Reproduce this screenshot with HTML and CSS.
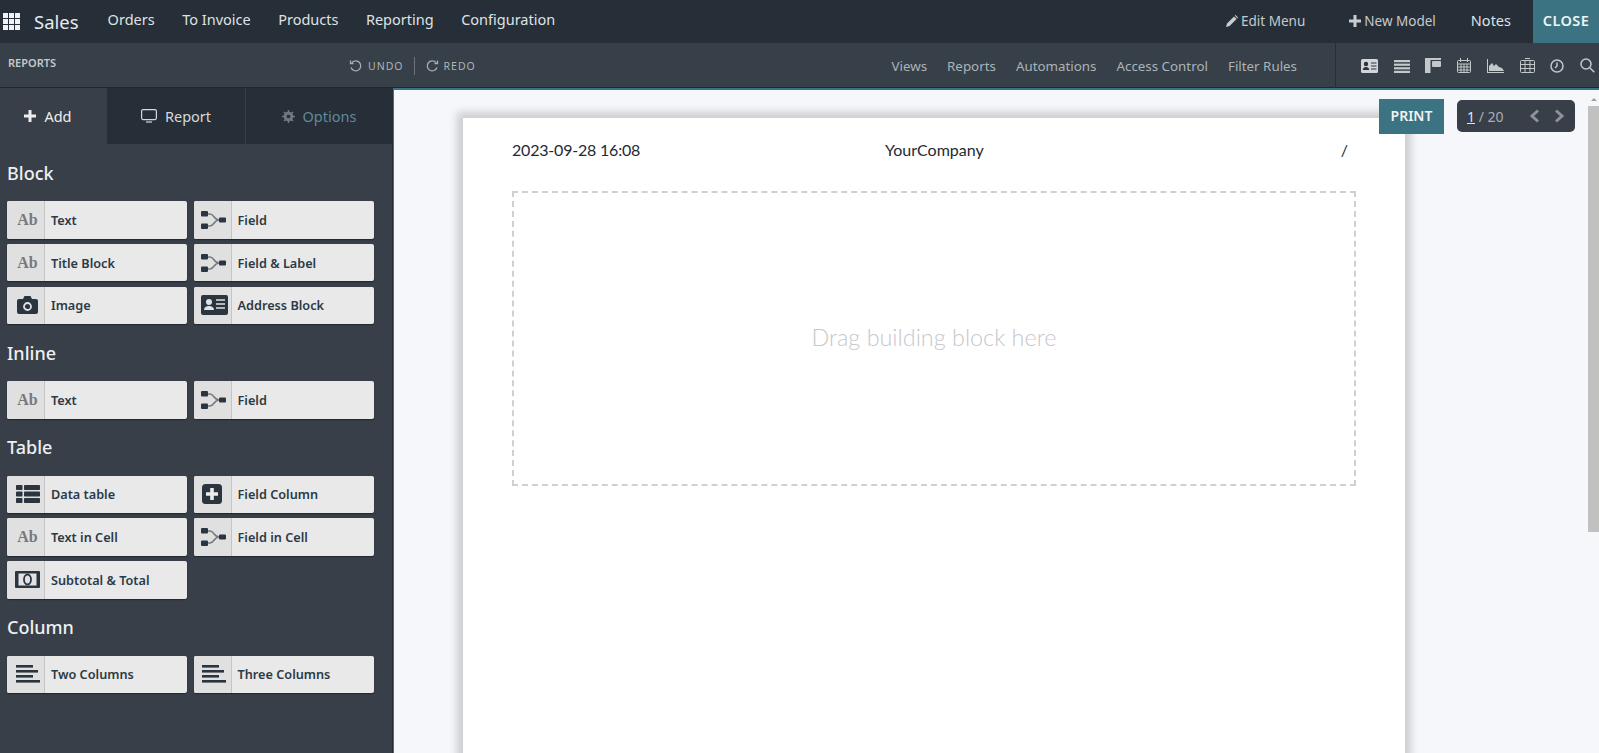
FILE: index.html
```html
<!DOCTYPE html>
<html lang="en">
<head>
    <meta charset="UTF-8">
    <title>Sales - Reports</title>
    <link rel="stylesheet" href="styles.css">
</head>
<body>
    <svg class="defs" width="0" height="0">
        <symbol id="i-field" viewBox="0 0 26 20">
            <path d="M6 4h3c4 0 4 6 9 6M6 16h3c4 0 4-6 9-6" fill="none" stroke="#77797c" stroke-width="1.6"/>
            <rect x="0" y="1" width="7" height="5.5" rx="1" fill="#2b3540"/>
            <rect x="0" y="13.5" width="7" height="5.5" rx="1" fill="#2b3540"/>
            <rect x="18" y="7.5" width="7" height="5" rx="1" fill="#2b3540"/>
        </symbol>
        <symbol id="i-lines" viewBox="0 0 24 20">
            <rect x="0" y="1" width="17" height="2.6" fill="#2b3540"/>
            <rect x="0" y="6" width="22" height="2.6" fill="#2b3540"/>
            <rect x="0" y="11" width="17" height="2.6" fill="#2b3540"/>
            <rect x="0" y="16" width="24" height="2.6" fill="#2b3540"/>
        </symbol>
    </svg>

    <header class="topbar">
        <svg class="apps" width="17" height="17" viewBox="0 0 17 17" fill="#f0f2f3">
            <rect width="5" height="5"/><rect x="6" width="5" height="5"/><rect x="12" width="5" height="5"/>
            <rect y="6" width="5" height="5"/><rect x="6" y="6" width="5" height="5"/><rect x="12" y="6" width="5" height="5"/>
            <rect y="12" width="5" height="5"/><rect x="6" y="12" width="5" height="5"/><rect x="12" y="12" width="5" height="5"/>
        </svg>
        <span class="brand">Sales</span>
        <nav class="menu">
            <a>Orders</a>
            <a>To Invoice</a>
            <a>Products</a>
            <a>Reporting</a>
            <a>Configuration</a>
        </nav>
        <div class="studio-menu">
            <a class="edit-menu">
                <svg width="12" height="12" viewBox="0 0 12 12" fill="#c9cdd0"><path d="M0 12l1-3.6L8 1.4 10.6 4 3.600 11zM8.800 .6l.8-.6 2.400 2.400-.8 1z"/></svg>
                Edit Menu
            </a>
            <a class="new-model">
                <svg width="12" height="12" viewBox="0 0 12 12" fill="#c9cdd0"><path d="M4.500 0h3v4.500H12v3H7.500V12h-3V7.500H0v-3h4.500z"/></svg>
                New Model
            </a>
            <a class="notes">Notes</a>
            <a class="close">CLOSE</a>
        </div>
    </header>

    <div class="toolbar">
        <span class="crumb">REPORTS</span>
        <div class="history">
            <a class="hist-btn">
                <svg width="14" height="14" viewBox="0 0 14 14" fill="none" stroke="#a7b0b4" stroke-width="1.3"><path d="M3 3.500A5 5 0 1 1 2 8.500"/><path d="M1.500 1.500v3h3"/></svg>
                UNDO
            </a>
            <i class="hist-sep"></i>
            <a class="hist-btn">
                <svg width="14" height="14" viewBox="0 0 14 14" fill="none" stroke="#a7b0b4" stroke-width="1.3"><path d="M11 3.500A5 5 0 1 0 12 8.500"/><path d="M12.500 1.500v3h-3"/></svg>
                REDO
            </a>
        </div>
        <nav class="links">
            <a>Views</a>
            <a>Reports</a>
            <a>Automations</a>
            <a>Access Control</a>
            <a>Filter Rules</a>
        </nav>
        <div class="views">
            <svg width="17" height="14" viewBox="0 0 17 14"><rect width="17" height="14" rx="1.500" fill="#d3d6d8"/><circle cx="5" cy="5" r="2.200" fill="#2b3540"/><path d="M1.800 11c0-4 6.400-4 6.400 0z" fill="#2b3540"/><path d="M10 4h5.500M10 7h5.500M10 10h5.500" stroke="#2b3540"/></svg>
            <svg width="16" height="14" viewBox="0 0 16 14" fill="#c3c8ca"><rect y="1" width="16" height="2.200"/><rect y="4.600" width="16" height="2.200"/><rect y="8.200" width="16" height="2.200"/><rect y="11.800" width="16" height="2.200"/></svg>
            <svg width="16" height="15" viewBox="0 0 16 15" fill="#c3c8ca"><rect width="16" height="2"/><rect y="2" width="5.500" height="13"/><rect x="7" y="3" width="9" height="6" rx="1"/></svg>
            <svg width="14" height="15" viewBox="0 0 14 15" fill="none" stroke="#c3c8ca"><rect x=".5" y="2.500" width="13" height="12" rx="1"/><path d="M.5 6h13M.5 9h13M.5 12h13M4 6v8M7 6v8M10 6v8M3.500 0v4M10.500 0v4"/></svg>
            <svg width="17" height="14" viewBox="0 0 17 14" fill="#c3c8ca"><path d="M0 0h1v13h16v1H0z"/><path d="M2 12V7l3-3 2 3 2-2 3 3 3 1 2 3z"/></svg>
            <svg width="15" height="15" viewBox="0 0 15 15" fill="none" stroke="#c3c8ca"><rect x=".5" y="2.500" width="14" height="12" rx="1"/><path d="M.5 6.500h14M.5 10.500h14M5 2.500v12M10 2.500v12M5 .5h5"/></svg>
            <svg width="14" height="14" viewBox="0 0 14 14" fill="none" stroke="#c3c8ca" stroke-width="1.5"><circle cx="7" cy="7" r="6"/><path d="M7 3.500V7L5 9"/></svg>
            <svg width="15" height="15" viewBox="0 0 15 15" fill="none" stroke="#c3c8ca" stroke-width="1.5"><circle cx="6" cy="6" r="5"/><path d="M9.800 9.800l4.500 4.500"/></svg>
        </div>
    </div>

    <div class="workspace">
        <aside class="sidebar">
            <div class="tabs">
                <a class="tab tab-add">
                    <svg width="12" height="12" viewBox="0 0 12 12" fill="#eceef0"><path d="M4.500 0h3v4.500H12v3H7.500V12h-3V7.500H0v-3h4.500z"/></svg>
                    Add
                </a>
                <a class="tab tab-report">
                    <svg width="16" height="14" viewBox="0 0 16 14" fill="none" stroke="#d6d9db" stroke-width="1.2"><rect x=".6" y=".6" width="14.800" height="10" rx="1.500"/><path d="M5 13h6"/></svg>
                    Report
                </a>
                <a class="tab tab-options">
                    <svg width="13" height="13" viewBox="0 0 13 13"><circle cx="6.500" cy="6.500" r="3.600" fill="none" stroke="#717a80" stroke-width="2.4"/><path d="M6.500 0v13M0 6.500h13M2 2l9 9M11 2l-9 9" stroke="#717a80" stroke-width="1.5"/><circle cx="6.500" cy="6.500" r="1.800" fill="#262e38"/></svg>
                    Options
                </a>
            </div>

            <section class="group">
                <h3>Block</h3>
                <div class="blocks">
                    <div class="block"><span class="block-icon ab">Ab</span><span class="block-label">Text</span></div>
                    <div class="block"><span class="block-icon"><svg width="26" height="20"><use href="#i-field"/></svg></span><span class="block-label">Field</span></div>
                    <div class="block"><span class="block-icon ab">Ab</span><span class="block-label">Title Block</span></div>
                    <div class="block"><span class="block-icon"><svg width="26" height="20"><use href="#i-field"/></svg></span><span class="block-label">Field &amp; Label</span></div>
                    <div class="block">
                        <span class="block-icon">
                            <svg width="21" height="18" viewBox="0 0 21 18"><path d="M2 3h4l1.500-3h6L15 3h4a2 2 0 0 1 2 2v11a2 2 0 0 1-2 2H2a2 2 0 0 1-2-2V5a2 2 0 0 1 2-2z" fill="#2b3540"/><circle cx="10.500" cy="10.500" r="3.500" fill="none" stroke="#e2e2e2" stroke-width="1.8"/></svg>
                        </span>
                        <span class="block-label">Image</span>
                    </div>
                    <div class="block">
                        <span class="block-icon">
                            <svg width="27" height="20" viewBox="0 0 27 20"><rect width="27" height="20" rx="2" fill="#2b3540"/><circle cx="8" cy="7" r="3" fill="#e2e2e2"/><path d="M3 15c0-5.500 10-5.500 10 0z" fill="#e2e2e2"/><path d="M15 5h9M15 9h9M15 13h9" stroke="#e2e2e2" stroke-width="1.5"/></svg>
                        </span>
                        <span class="block-label">Address Block</span>
                    </div>
                </div>
            </section>

            <section class="group">
                <h3>Inline</h3>
                <div class="blocks">
                    <div class="block"><span class="block-icon ab">Ab</span><span class="block-label">Text</span></div>
                    <div class="block"><span class="block-icon"><svg width="26" height="20"><use href="#i-field"/></svg></span><span class="block-label">Field</span></div>
                </div>
            </section>

            <section class="group">
                <h3>Table</h3>
                <div class="blocks">
                    <div class="block">
                        <span class="block-icon">
                            <svg width="24" height="18" viewBox="0 0 24 18" fill="#2b3540"><rect width="6.500" height="5" rx=".8"/><rect x="8" width="16" height="5" rx=".8"/><rect y="6.500" width="6.500" height="5" rx=".8"/><rect x="8" y="6.500" width="16" height="5" rx=".8"/><rect y="13" width="6.500" height="5" rx=".8"/><rect x="8" y="13" width="16" height="5" rx=".8"/></svg>
                        </span>
                        <span class="block-label">Data table</span>
                    </div>
                    <div class="block">
                        <span class="block-icon icon-plus">
                            <svg width="20" height="20" viewBox="0 0 20 20"><rect width="20" height="20" rx="3.500" fill="#2b3540"/><path d="M8.200 4h3.600v4.200H16v3.600h-4.200V16H8.200v-4.200H4V8.200h4.200z" fill="#ececec"/></svg>
                        </span>
                        <span class="block-label">Field Column</span>
                    </div>
                    <div class="block"><span class="block-icon ab">Ab</span><span class="block-label">Text in Cell</span></div>
                    <div class="block"><span class="block-icon"><svg width="26" height="20"><use href="#i-field"/></svg></span><span class="block-label">Field in Cell</span></div>
                    <div class="block">
                        <span class="block-icon">
                            <svg width="25" height="17" viewBox="0 0 25 17"><rect width="25" height="17" rx="1" fill="#2b3540"/><rect x="3.500" y="2.500" width="18" height="12" fill="#e2e2e2"/><ellipse cx="12.500" cy="8.500" rx="3.500" ry="5" fill="none" stroke="#2b3540" stroke-width="1.8"/></svg>
                        </span>
                        <span class="block-label">Subtotal &amp; Total</span>
                    </div>
                </div>
            </section>

            <section class="group">
                <h3>Column</h3>
                <div class="blocks">
                    <div class="block"><span class="block-icon"><svg width="24" height="20"><use href="#i-lines"/></svg></span><span class="block-label">Two Columns</span></div>
                    <div class="block"><span class="block-icon"><svg width="24" height="20"><use href="#i-lines"/></svg></span><span class="block-label">Three Columns</span></div>
                </div>
            </section>
        </aside>

        <main class="canvas">
            <div class="sheet">
                <div class="sheet-head">
                    <span class="head-date">2023-09-28 16:08</span>
                    <span class="head-company">YourCompany</span>
                    <span class="head-page">/</span>
                </div>
                <div class="dropzone">Drag building block here</div>
            </div>
            <a class="print">PRINT</a>
            <div class="pager">
                <span class="pager-count"><u>1</u> / 20</span>
                <span class="pager-arrows">
                    <svg width="11" height="14" viewBox="0 0 11 14" fill="none" stroke="#8d9296" stroke-width="3"><path d="M9 1.500L3 7l6 5.500"/></svg>
                    <svg width="11" height="14" viewBox="0 0 11 14" fill="none" stroke="#8d9296" stroke-width="3"><path d="M2 1.500L8 7l-6 5.500"/></svg>
                </span>
            </div>
            <div class="scrollbar"><div class="scroll-thumb"></div></div>
        </main>
    </div>
</body>
</html>
```

FILE: styles.css
```css
* {
    box-sizing: border-box;
}
html, body {
    height: 100%;
}
body {
    margin: 0;
    display: flex;
    flex-direction: column;
    overflow: hidden;
    font-family: "Noto Sans", Arial, sans-serif;
    background-color: #f5f7fa;
}
.defs {
    position: absolute;
}

/* top bar */
.topbar {
    height: 43px;
    flex: none;
    display: flex;
    align-items: center;
    padding-left: 3px;
    background-color: #262e38;
    color: #dfe2e4;
    font-size: 14.5px;
}
.brand {
    margin-left: 14px;
    font-size: 18.5px;
    color: #e8eaec;
}
.menu {
    display: flex;
    gap: 27.5px;
    margin-left: 29px;
    padding-bottom: 5px;
}
.studio-menu {
    margin-left: auto;
    height: 100%;
    display: flex;
    align-items: center;
}
.edit-menu, .new-model {
    display: flex;
    align-items: center;
    gap: 3px;
    padding-bottom: 2px;
    font-size: 13.5px;
    color: #c5cacd;
}
.new-model {
    margin-left: 44px;
}
.notes {
    margin-left: 35px;
    padding-bottom: 3px;
}
.close {
    margin-left: 22px;
    width: 66px;
    height: 100%;
    padding-bottom: 4px;
    display: flex;
    align-items: center;
    justify-content: center;
    background-color: #3c7382;
    color: #eef3f4;
    font-size: 14.5px;
    font-weight: 600;
    letter-spacing: .4px;
}

/* second bar */
.toolbar {
    height: 45px;
    flex: none;
    display: flex;
    align-items: center;
    background-color: #373f48;
    box-shadow: inset 0 -1px 0 #1f2730;
    color: #a9b4b8;
}
.crumb {
    width: 349px;
    padding-left: 8px;
    margin-top: -7px;
    font-size: 11px;
    font-weight: 600;
    color: #c4c9cc;
}
.history {
    display: flex;
    align-items: center;
    font-size: 10.5px;
    letter-spacing: 1px;
}
.hist-btn {
    display: flex;
    align-items: center;
    gap: 5px;
}
.hist-sep {
    width: 1px;
    height: 18px;
    margin: 0 10px;
    background-color: #6c747a;
}
.links {
    display: flex;
    gap: 20px;
    margin-left: auto;
    font-size: 13.35px;
}
.views {
    margin-left: 38px;
    width: 264px;
    height: 100%;
    padding: 0 4px 0 25px;
    display: flex;
    align-items: center;
    justify-content: space-between;
    border-left: 1px solid #262e38;
}

/* main area */
.workspace {
    flex: 1;
    min-height: 0;
    display: flex;
}
.sidebar {
    width: 393px;
    flex: none;
    background-color: #383f48;
    border-right: 1px solid #262e38;
    color: #eceef0;
}
.tabs {
    height: 56px;
    margin-bottom: 2px;
    display: flex;
    background-color: #262e38;
    font-size: 14.5px;
}
.tab {
    display: flex;
    align-items: center;
    justify-content: center;
    gap: 8px;
}
.tab-add {
    width: 107px;
    padding-right: 11px;
    background-color: #383f48;
}
.tab-report {
    width: 139px;
    color: #d6d9db;
    border-right: 1px solid #383f48;
}
.tab-options {
    flex: 1;
    color: #5f8a96;
}
.group {
    margin-top: 14.5px;
    padding-left: 7px;
}
.group h3 {
    margin: 0 0 14.5px;
    font-size: 18px;
    line-height: 28px;
    font-weight: 500;
    color: #eef0f1;
}
.blocks {
    display: grid;
    grid-template-columns: 180px 180px;
    column-gap: 6.5px;
    row-gap: 5.25px;
}
.block {
    height: 37.5px;
    display: flex;
    align-items: center;
    background-color: #e9e9e9;
    border-radius: 2px;
    box-shadow: 0 1px 1px #20272f;
    color: #2c3a45;
}
.block-icon {
    width: 38px;
    height: 100%;
    flex: none;
    padding-left: 4px;
    display: flex;
    align-items: center;
    justify-content: center;
    background-color: #e0e0e0;
    border-right: 1px solid #c4c4c4;
    border-radius: 2px 0 0 2px;
}
.icon-plus {
    padding-left: 0;
}
.ab {
    font-family: "Liberation Serif", serif;
    font-size: 16px;
    font-weight: 700;
    color: #77797c;
}
.block-label {
    padding-left: 6px;
    font-size: 12.7px;
    font-weight: 600;
    white-space: nowrap;
}

/* canvas with the sheet */
.canvas {
    position: relative;
    flex: 1;
    min-width: 0;
    overflow: hidden;
    padding: 28px 194px 0 69px;
    border-top: 2px solid #3c7382;
    border-left: 1px solid #3c7382;
}
.sheet {
    height: 900px;
    padding: 0 49px;
    background-color: #fff;
    box-shadow: 0 0 8px 6px rgba(0, 0, 0, .17);
}
.sheet-head {
    height: 73px;
    padding-bottom: 10px;
    display: grid;
    grid-template-columns: 373px 1fr auto;
    align-items: center;
    font-family: Lato, sans-serif;
    font-size: 16px;
    color: #1e2a33;
}
.head-date {
    letter-spacing: -.2px;
}
.head-page {
    margin-right: 8px;
}
.dropzone {
    height: 295px;
    padding-bottom: 3px;
    display: flex;
    align-items: center;
    justify-content: center;
    border: 2px dashed #d0d0d0;
    font-family: Lato, sans-serif;
    font-weight: 300;
    font-size: 23.4px;
    color: #c6c8cb;
}

/* these sit over the sheet */
.print {
    position: absolute;
    top: 9px;
    left: 985px;
    width: 65px;
    height: 35px;
    padding-bottom: 2px;
    display: flex;
    align-items: center;
    justify-content: center;
    background-color: #3c7382;
    color: #eef3f4;
    font-size: 14px;
    font-weight: 600;
}
.pager {
    position: absolute;
    top: 10px;
    left: 1063px;
    width: 118px;
    height: 32px;
    padding: 0 10px;
    display: flex;
    align-items: center;
    justify-content: space-between;
    background-color: #383f48;
    border-radius: 5px;
    color: #a9aeb1;
    font-size: 14px;
}
.pager-count u {
    color: #e4e6e8;
}
.pager-arrows {
    display: flex;
    gap: 14px;
}
.scrollbar {
    position: absolute;
    top: 0;
    right: 0;
    bottom: 0;
    width: 11px;
    padding-top: 16px;
    background-color: #f5f7fa;
}
.scrollbar::before {
    content: "";
    position: absolute;
    top: 8px;
    left: 3px;
    border: 3px solid transparent;
    border-top: 0;
    border-bottom-color: #a0a0a0;
}
.scroll-thumb {
    height: 426px;
    background-color: #c1c1c1;
}
```
